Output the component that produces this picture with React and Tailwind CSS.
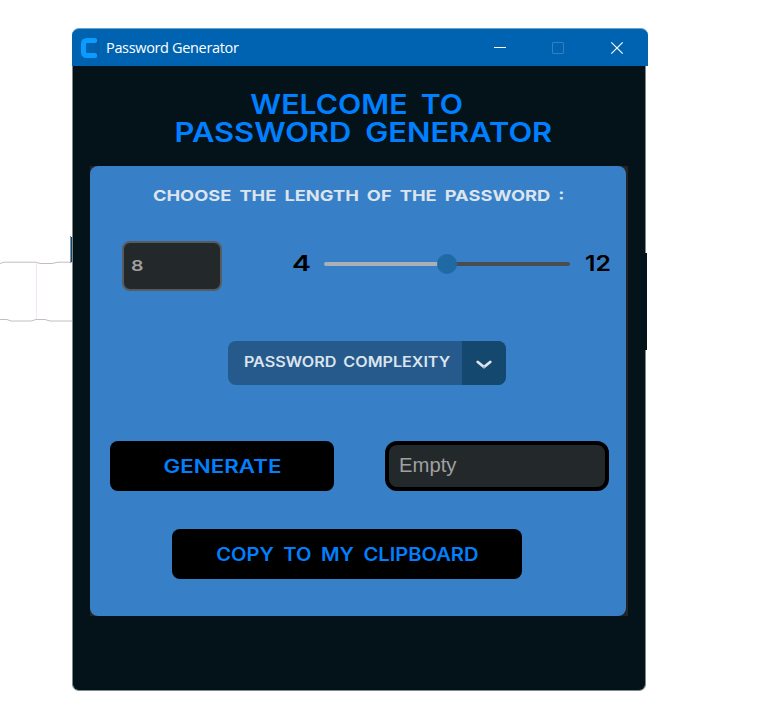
import React from "react";

function Wide({ children, className = "" }) {
  return (
    <span className={`inline-block whitespace-nowrap font-['Inter',sans-serif] ${className}`}>
      {children}
    </span>
  );
}

function TitleBar() {
  return (
    <header className="flex h-[38px] w-[576px] items-center rounded-t-[7px] border-t border-[#6ea3cc] bg-[#0063b1] pl-[9px]">
      <svg width="20" height="20" viewBox="0 0 20 20" fill="none">
        <path d="M13 1h4q2 0 2 2v14q0 2-2 2h-4z" fill="#045fab" />
        <path d="M13.700 2.500H6Q2.500 2.500 2.500 6v8q0 3.500 3.500 3.500h7.700" stroke="#0c9bff" strokeWidth="5" strokeLinecap="round" />
      </svg>
      <h1 className="ml-[5px] w-[380px] font-['Open_Sans',sans-serif] text-[14.5px] leading-5 tracking-[-0.34px] text-white">
        Password Generator
      </h1>
      <svg className="ml-[7px]" width="132" height="14" viewBox="0 0 132 14" fill="none">
        <path d="M1 6.5h12" stroke="#fff" />
        <rect x="59.5" y="1.500" width="11" height="11" stroke="#347fc0" rx="0.500" />
        <path d="m118.300 1.300 11.400 11.400m0-11.400-11.400 11.400" stroke="#fff" strokeWidth="1.200" />
      </svg>
    </header>
  );
}

function Slider() {
  return (
    <div className="relative flex h-5 w-[246px] items-center">
      <div className="h-1 w-[123px] rounded-l-full bg-[#aab0b5]" />
      <div className="h-1 w-[123px] rounded-r-full bg-[#4a4d50]" />
      <div className="absolute left-[113px] top-0 size-5 rounded-full bg-[#1f6aa5]" />
    </div>
  );
}

function Panel() {
  return (
    <main className="ml-[17px] mt-[20px] h-[450px] w-[538px] bg-[#242424]">
      <div className="flex h-full w-[536px] flex-col rounded-[8px] bg-[#377fc7]">
        <div className="mt-[18px] flex h-6 w-full justify-center pl-[2px] text-[15px] font-bold leading-6 text-[#dce4ee]">
          <Wide className="scale-x-[1.22] [word-spacing:3px]">CHOOSE THE LENGTH OF THE PASSWORD :</Wide>
        </div>
        <div className="ml-8 mt-[33px] flex h-[50px] items-center">
          <div className="flex h-[50px] w-[100px] items-center rounded-[8px] border-2 border-[#565b5e] bg-[#23282b] pl-[7px] text-[15px] font-semibold text-[#a0a0a0]">
            <Wide className="origin-left scale-x-[1.3]">8</Wide>
          </div>
          <div className="ml-[70px] flex h-[50px] w-[32px] items-center pb-[5px] text-[21px] font-semibold leading-6 text-black">
            <Wide className="origin-left scale-x-[1.35]">4</Wide>
          </div>
          <div className="-mt-1 h-5">
            <Slider />
          </div>
          <div className="ml-[15px] pb-[6px] text-[21px] font-semibold leading-6 text-black">
            <Wide className="origin-left scale-x-[1.18]">12</Wide>
          </div>
        </div>
        <div className="ml-[138px] mt-[50px] flex h-11 w-[278px] overflow-hidden rounded-[8px] bg-[#265a8c]">
          <div className="flex w-[234px] items-center pb-[3px] pl-4 text-[14px] font-semibold text-[#dce4ee]">
            <Wide className="origin-left scale-x-[1.152] [word-spacing:2.5px]">PASSWORD COMPLEXITY</Wide>
          </div>
          <div className="flex w-11 items-center justify-center bg-[#14486f]">
            <svg className="mt-[3px]" width="16" height="10" viewBox="0 0 16 10" fill="none">
              <path d="m1.800 2 6.200 5 6.200-5" stroke="#dce4ee" strokeWidth="2.800" strokeLinecap="round" strokeLinejoin="miter" />
              <path d="m7.500 7.500.5-1 .5 1" stroke="#7796ae" strokeWidth="1" />
            </svg>
          </div>
        </div>
        <div className="ml-5 mt-14 flex h-[50px] gap-[51px]">
          <button className="flex h-[50px] w-[224px] items-center justify-center rounded-[8px] bg-black text-[18px] font-semibold text-[#0080ff]">
            <Wide className="scale-x-[1.24]">GENERATE</Wide>
          </button>
          <div className="flex h-[50px] w-[224px] items-center rounded-[12px] border-4 border-black bg-[#23282b] pb-[2px] pl-[10px] font-['Liberation_Sans',sans-serif] text-[20.300px] text-[#a0a0a0]">
            Empty
          </div>
        </div>
        <button className="ml-[82px] mt-[38px] flex h-[50px] w-[350px] items-center justify-center rounded-[8px] bg-black text-[18px] font-semibold text-[#0080ff]">
          <Wide className="scale-x-[1.118] [word-spacing:4px]">COPY TO MY CLIPBOARD</Wide>
        </button>
      </div>
    </main>
  );
}

export default function App() {
  return (
    <div className="relative h-[727px] w-[778px] overflow-hidden bg-white pl-[72px] pt-7">
      <svg className="absolute left-0 top-[230px]" width="74" height="96" viewBox="0 0 74 96" fill="none">
        <path d="M0 33.500 4 32.200h32l4 1.300h12l6-1.300h14M0 89.500h7l4 1.500h20l5-1.500h9l5 1.500h22" stroke="#c5bcc3" />
        <path d="M36.500 33v56" stroke="#f3e5f6" />
        <path d="M70.500 6v27" stroke="#8b9298" />
      </svg>
      <TitleBar />
      <div className="relative h-[625px] w-[574px] rounded-b-[7px] border-x border-b border-[#7d898c] bg-[#04121a]">
        <div className="absolute -right-[2px] top-[187px] h-[97px] w-[2px] bg-[#04121a]" />
        <div className="absolute -left-[2px] top-[171px] h-[25px] w-[1px] bg-[#064878]" />
        <h2 className="flex h-20 w-[583px] flex-col items-center pt-6 text-[27.500px] font-semibold leading-7 text-[#0080ff]">
          <Wide className="mr-[15px] scale-x-[1.1] [word-spacing:5px]">WELCOME TO</Wide>
          <Wide className="mr-[2px] scale-x-[1.122] [word-spacing:5.500px]">PASSWORD GENERATOR</Wide>
        </h2>
        <Panel />
      </div>
    </div>
  );
}
